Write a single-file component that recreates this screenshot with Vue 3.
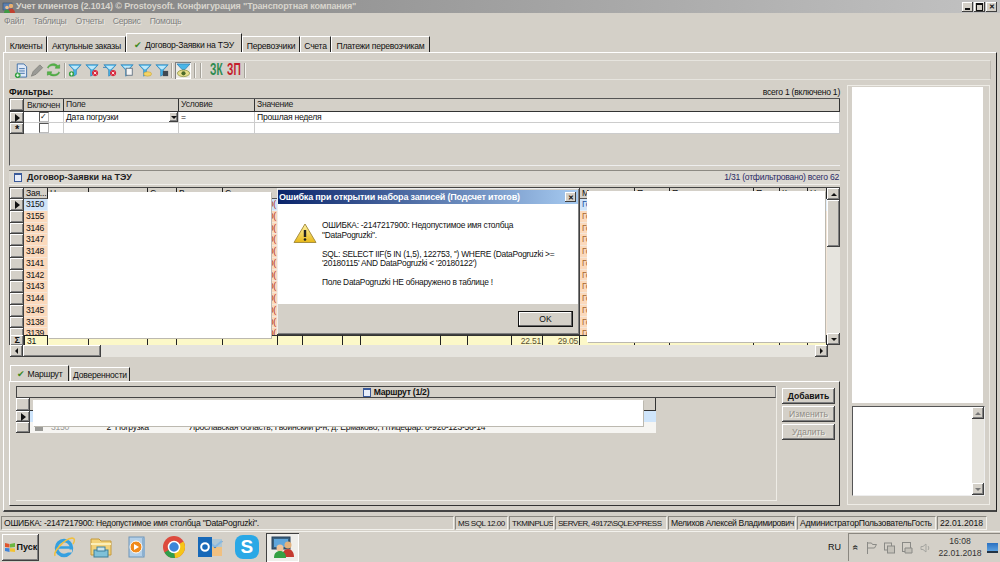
<template>
  <div class="desktop">
    <div class="titlebar">
      <svg class="app-ico" width="13" height="12" viewBox="0 0 13 12">
        <rect x="1" y="2" width="9" height="7" fill="#5b7fb0" stroke="#34506f" stroke-width=".6" />
        <circle cx="9" cy="5" r="2.2" fill="#e8b070" />
        <path d="M5 12c0-3 2-4.500 4-4.500s4 1.500 4 4.500z" fill="#c04030" />
        <circle cx="5" cy="6.500" r="1.800" fill="#eec090" />
        <path d="M2 12c0-2.500 1.300-3.500 3-3.500s3 1 3 3.500z" fill="#3f9a45" />
      </svg>
      <span class="title-text">Учет клиентов (2.1014) © Prostoysoft. Конфигурация "Транспортная компания"</span>
      <div class="win-btns">
        <span class="win-btn"><i class="min-glyph"></i></span>
        <span class="win-btn"><i class="max-glyph"></i></span>
        <span class="win-btn close-btn">✕</span>
      </div>
    </div>

    <div class="menubar">
      <span v-for="m in menu" :key="m">{{ m }}</span>
    </div>

    <div class="tabs">
      <div v-for="t in tabs" :key="t.name" class="tab" :class="{ active: t.active }" :style="{ width: t.w + 'px' }">
        <span v-if="t.active" class="check">✔</span>{{ t.name }}
      </div>
    </div>

    <div class="page">
      <div class="toolbar">
        <svg class="tb-ico" width="14" height="15" viewBox="0 0 14 16">
          <path d="M3 1h7l3 3v11H3z" fill="#dfe9f7" stroke="#3f6fa8" />
          <path d="M5 6h6M5 8.500h6M5 11h6" stroke="#3f6fa8" />
          <circle cx="3.500" cy="13" r="3" fill="#35a043" />
          <path d="M1.800 13h3.400M3.500 11.300v3.400" stroke="#fff" />
        </svg>
        <svg class="tb-ico" width="16" height="15" viewBox="0 0 16 16">
          <path d="M2 14l2-5 7-7 3 3-7 7z" fill="#9a9a96" stroke="#85857f" />
        </svg>
        <svg class="tb-ico" width="15" height="14" viewBox="0 0 16 16">
          <path d="M2 6c1-3 6-4 9-2l-1 2h5V2l-2 1C9-1 3 1 1 5z" fill="#58b848" stroke="#2d8a2d" stroke-width=".5" />
          <path d="M14 10c-1 3-6 4-9 2l1-2H1v4l2-1c4 3 10 2 12-2z" fill="#58b848" stroke="#2d8a2d" stroke-width=".5" />
        </svg>
        <i class="tb-sep sep-first"></i>
        <span v-for="f in funnels" :key="f" class="funnel">
          <svg width="14" height="14" viewBox="0 0 16 16">
            <path d="M1 2h14L9.500 8v5L6.500 15V8z" fill="#49b6e8" stroke="#2c7fb8" stroke-width=".8" />
            <path d="M3 3h10L9 7H7z" fill="#bfe8fa" />
            <g v-if="f === 'add'">
              <circle cx="4" cy="12.500" r="3" fill="#35a043" />
              <path d="M2.300 12.500h3.400M4 10.800v3.400" stroke="#fff" />
            </g>
            <g v-if="f === 'del' || f === 'delall'">
              <circle cx="11.500" cy="11.500" r="3.500" fill="#d8283c" />
              <path d="M10 10l3 3M13 10l-3 3" stroke="#fff" />
            </g>
            <path v-if="f === 'delall'" d="M0 5h4" stroke="#2c7fb8" />
            <rect v-if="f === 'edit'" x="7" y="6" width="7" height="8" fill="#f4f4f4" stroke="#607080" />
            <ellipse v-if="f === 'open'" cx="11" cy="12.500" rx="4.500" ry="2.500" fill="#f4d466" stroke="#c09a30" stroke-width=".6" />
            <rect v-if="f === 'save'" x="9" y="9" width="6" height="6" fill="#404850" />
          </svg>
        </span>
        <i class="tb-sep sep-eye"></i>
        <span class="eye-btn">
          <svg width="15" height="15" viewBox="0 0 16 16">
            <path d="M1 1h14L9.500 7H6.500z" fill="#49b6e8" stroke="#2c7fb8" stroke-width=".8" />
            <ellipse cx="8" cy="11" rx="6.500" ry="3.500" fill="#e6dc8a" stroke="#7c8a30" stroke-width=".7" />
            <circle cx="8" cy="11" r="2.200" fill="#4a6a28" />
          </svg>
        </span>
        <i class="tb-sep sep-a"></i><i class="tb-sep sep-b"></i>
        <span class="big-letter green">ЗК</span>
        <span class="big-letter red">ЗП</span>
        <i class="tb-sep sep-c"></i>
      </div>

      <div class="work">
        <div class="left">
          <div class="filters">
            <div class="section-label">
              <b>Фильтры:</b>
              <span>всего 1 (включено 1)</span>
            </div>
            <div class="filter-grid">
              <div class="f-row f-head">
                <span class="ind raised"></span><span class="fc c-on">Включен</span><span class="fc c-field">Поле</span><span class="fc c-cond">Условие</span><span class="fc c-val">Значение</span>
              </div>
              <div class="f-row f-data">
                <span class="ind raised"><i class="arrow"></i></span>
                <span class="fc c-on"><i class="cb checked">✓</i></span>
                <span class="fc c-field">Дата погрузки<i class="drop raised"><i class="tri-down"></i></i></span>
                <span class="fc c-cond">=</span>
                <span class="fc c-val">Прошлая неделя</span>
              </div>
              <div class="f-row f-data">
                <span class="ind raised star">*</span>
                <span class="fc c-on"><i class="cb"></i></span>
                <span class="fc c-field"></span><span class="fc c-cond"></span><span class="fc c-val"></span>
              </div>
            </div>
          </div>

          <div class="section-bar">
            <b><i class="doc-mark"></i>Договор-Заявки на ТЭУ</b>
            <span>1/31 (отфильтровано) всего 62</span>
          </div>

          <div class="main-grid">
            <div class="grid-inner">
              <div class="g-row g-head">
                <span class="ind raised"></span>
                <span v-for="(c, i) in columns" :key="i" class="gh" :class="c.cls" :style="{ width: c.w + 'px' }">{{ c.title }}</span>
              </div>
              <div class="g-rows">
                <div v-for="(r, ri) in rows" :key="r" class="g-row" :class="{ current: ri === 0 }">
                  <span class="ind raised"><i v-if="ri === 0" class="arrow"></i></span>
                  <span v-for="(c, i) in columns" :key="i" class="gc" :class="c.cell" :style="{ width: c.w + 'px' }">{{ i === 0 ? r : c.val }}</span>
                </div>
              </div>
              <div class="g-row g-sum">
                <span class="ind raised sigma">Σ</span>
                <span v-for="(c, i) in columns" :key="i" class="gs" :class="{ 'sum-first': i === 0 }" :style="{ width: c.w + 'px' }">{{ c.sum }}</span>
              </div>
            </div>
            <div class="v-scroll">
              <span class="sb-btn raised"><i class="tri-up"></i></span>
              <span class="sb-thumb raised"></span>
              <span class="sb-track"></span>
              <span class="sb-btn raised"><i class="tri-down"></i></span>
            </div>
            <div class="cover cover-left"></div>
            <div class="cover cover-right"></div>
          </div>

          <div class="h-scroll">
            <span class="sb-btn raised"><i class="tri-left"></i></span>
            <span class="h-thumb raised"></span>
            <span class="sb-track"></span>
            <span class="sb-btn raised"><i class="tri-right"></i></span>
            <span class="sb-corner"></span>
          </div>

          <div class="sub-tabs">
            <div class="sub-tab active"><span class="check">✔</span>Маршрут</div>
            <div class="sub-tab">Доверенности</div>
          </div>
          <div class="sub-panel">
            <div class="route-box">
              <div class="route-title"><i class="doc-mark"></i>Маршрут (1/2)</div>
              <div class="route-grid">
                <div class="r-row r-head"><span class="ind raised"></span><span class="r-rest"></span></div>
                <div class="r-row r-sel"><span class="ind raised"><i class="arrow"></i></span><span class="r-rest"></span></div>
                <div class="r-row r-last">
                  <span class="ind raised"></span>
                  <span class="r-ico"></span>
                  <span class="r-id">3150</span>
                  <span class="r-num">2</span>
                  <span class="r-kind">Погрузка</span>
                  <span class="r-addr">Ярославская область, Гвоинский р-н, д. Ермаково, Птицефар. 8-920-123-56-14</span>
                </div>
                <div class="cover cover-route"></div>
              </div>
            </div>
            <div class="route-btns">
              <button class="win-button strong">Добавить</button>
              <button class="win-button off">Изменить</button>
              <button class="win-button off">Удалить</button>
            </div>
          </div>
        </div>

        <div class="right">
          <div class="right-white"></div>
          <div class="memo">
            <div class="memo-text"></div>
            <div class="v-scroll memo-scroll">
              <span class="sb-btn raised"><i class="tri-up grey"></i></span>
              <span class="sb-track"></span>
              <span class="sb-btn raised"><i class="tri-down grey"></i></span>
            </div>
          </div>
        </div>
      </div>
    </div>

    <div class="statusbar">
      <span
        v-for="s in statusCells"
        :key="s.t"
        class="st"
        :class="{ latin: s.latin }"
        :style="{ width: s.w + 'px', letterSpacing: s.ls + 'px' }"
      >{{ s.t }}</span>
    </div>

    <div class="taskbar">
      <button class="start">
        <svg width="12" height="11" viewBox="0 0 12 11">
          <path d="M1 1l4.500 1v3.500L1 5z" fill="#e0552c" />
          <path d="M6 2l5-1v4l-5 .500z" fill="#6ab640" />
          <path d="M1 6l4.500.200V10L1 9z" fill="#3f83d8" />
          <path d="M6 6.200l5 .300v3.500l-5-.500z" fill="#f2c230" />
        </svg>
        <b>Пуск</b>
      </button>
      <div class="apps">
        <span class="app">
          <svg width="24" height="24" viewBox="0 0 24 24">
            <circle cx="12" cy="13" r="7.500" fill="none" stroke="#35a0e0" stroke-width="3.500" />
            <path d="M6 12.500h13" stroke="#35a0e0" stroke-width="2.500" />
            <path d="M20 16h-6" stroke="#d4d0c8" stroke-width="3" />
            <path d="M3 21C1 17 12 4 20 3c3 0 3 3 1 6" fill="none" stroke="#f0c040" stroke-width="1.500" />
          </svg>
        </span>
        <span class="app">
          <svg width="24" height="24" viewBox="0 0 24 24">
            <path d="M2 4h8l2 2h10v14H2z" fill="#f3d27a" stroke="#c49a3c" />
            <path d="M2 9h20" stroke="#fbeeb8" stroke-width="2" />
            <rect x="5" y="15" width="14" height="7" fill="#7fc1d8" stroke="#3d7f9a" />
            <rect x="8" y="12" width="8" height="4" fill="#c8e4ee" stroke="#3d7f9a" />
          </svg>
        </span>
        <span class="app">
          <svg width="24" height="24" viewBox="0 0 24 24">
            <rect x="4" y="2" width="15" height="20" fill="#b4d0e8" stroke="#6d94b8" />
            <rect x="17" y="3" width="3" height="18" fill="#8db0cf" />
            <circle cx="11" cy="12" r="6" fill="#f08a1c" stroke="#fff" />
            <path d="M9 9l5 3-5 3z" fill="#fff" />
          </svg>
        </span>
        <span class="app">
          <svg width="24" height="24" viewBox="0 0 24 24">
            <circle cx="12" cy="12" r="11" fill="#dd4b3e" />
            <path d="M12 12L2.500 17.500A11 11 0 0 0 13 23z" fill="#2f9e4a" />
            <path d="M12 12l9.500-5.500A11 11 0 0 1 13 23z" fill="#f5c518" />
            <circle cx="12" cy="12" r="5.500" fill="#3d85d8" stroke="#fff" stroke-width="1.500" />
          </svg>
        </span>
        <span class="app">
          <svg width="26" height="24" viewBox="0 0 26 24">
            <rect x="11" y="4" width="14" height="17" fill="#f0c080" />
            <path d="M11 6l7 6 7-6" fill="none" stroke="#2a78c2" stroke-width="2" />
            <rect x="11" y="4" width="14" height="8" fill="#9dc8ea" opacity=".8" />
            <rect x="1" y="2" width="14" height="20" fill="#1668b8" />
            <circle cx="8" cy="12" r="3.800" fill="none" stroke="#fff" stroke-width="2" />
          </svg>
        </span>
        <span class="app skype"><b>S</b></span>
        <span class="app current-app">
          <svg width="26" height="24" viewBox="0 0 26 24">
            <rect x="2" y="2" width="18" height="12" fill="#39617f" stroke="#28405a" />
            <rect x="4" y="4" width="14" height="8" fill="#5fa6dc" />
            <circle cx="18" cy="10" r="3.500" fill="#e4b27c" />
            <path d="M12 22c0-5 2.500-8 6-8s6 3 6 8z" fill="#c43a30" />
            <circle cx="10" cy="13" r="3.500" fill="#f0c49c" />
            <path d="M4 23c0-5 2.500-7 6-7s6 2 6 7z" fill="#35a043" />
          </svg>
        </span>
      </div>
      <span class="lang">RU</span>
      <div class="tray">
        <span class="tray-up">«</span>
        <svg width="11" height="12" viewBox="0 0 11 12" fill="none" stroke="#8a8a86"><path d="M1.500 0v12M1.500 1h4l1 1.500h4L8.500 6h-7" /></svg>
        <svg width="11" height="12" viewBox="0 0 11 12" fill="none" stroke="#8a8a86"><rect x=".5" y="1" width="7" height="7" /><rect x="3.500" y="4" width="7" height="7" fill="#c4c1b9" /></svg>
        <svg width="11" height="12" viewBox="0 0 11 12" fill="none" stroke="#8a8a86"><rect x=".5" y=".5" width="8" height="9" /><path d="M3 6h7v5H3z" fill="#c4c1b9" /></svg>
        <svg width="11" height="12" viewBox="0 0 11 12" fill="none" stroke="#a5a5a0"><path d="M1 4.500h2L6 2v8L3 7.500H1zM8 4c1 1 1 3 0 4" /></svg>
        <div class="clock"><span>16:08</span><span>22.01.2018</span></div>
        <span class="show-desktop"></span>
      </div>
    </div>

    <div class="dialog">
      <div class="dlg-title">
        <b>Ошибка при открытии набора записей (Подсчет итогов)</b>
        <span class="win-btn dlg-close">✕</span>
      </div>
      <div class="dlg-body">
        <svg class="warn" width="24" height="21" viewBox="0 0 24 21">
          <defs>
            <linearGradient id="warn-fill" x1="0" y1="0" x2="0" y2="1">
              <stop offset="0" stop-color="#fff4a8" />
              <stop offset="1" stop-color="#e8b818" />
            </linearGradient>
          </defs>
          <path d="M12 1L23 19.500H1z" fill="url(#warn-fill)" stroke="#a89040" stroke-linejoin="round" />
          <path d="M12 7v7" stroke="#222" stroke-width="2.400" />
          <circle cx="12" cy="16.500" r="1.300" fill="#222" />
        </svg>
        <div class="dlg-text">
          <p>ОШИБКА: -2147217900: Недопустимое имя столбца<br />"DataPogruzki".</p>
          <p>SQL: SELECT IIF(5 IN (1,5), 122753, '') WHERE (DataPogruzki &gt;=<br />'20180115' AND DataPogruzki &lt; '20180122')</p>
          <p>Поле DataPogruzki НЕ обнаружено в таблице !</p>
        </div>
      </div>
      <div class="dlg-foot">
        <button class="ok-btn">OK</button>
      </div>
    </div>
  </div>
</template>

<script setup>
const menu = ['Файл', 'Таблицы', 'Отчеты', 'Сервис', 'Помощь']

const tabs = [
  { name: 'Клиенты', w: 42 },
  { name: 'Актульные заказы', w: 79 },
  { name: 'Договор-Заявки на ТЭУ', w: 116, active: true },
  { name: 'Перевозчики', w: 58 },
  { name: 'Счета', w: 31 },
  { name: 'Платежи перевозчикам', w: 99 }
]

const funnels = ['add', 'del', 'delall', 'edit', 'open', 'save']

const rows = [3150, 3155, 3146, 3147, 3148, 3141, 3142, 3143, 3144, 3145, 3138, 3139]

const widths = [24, 41, 59, 29, 46, 55, 25, 40, 18, 80, 27, 44, 31, 37, 55, 35, 84, 26, 28, 19]
const titles = ['Зая...', 'Н', '', 'С', 'В', 'С', '', '', '', '', '', '', '', '', 'М', 'П', 'П', 'П', 'К', 'Н']
const columns = widths.map((w, i) => ({
  w,
  title: titles[i],
  cls: { red: i === 2 },
  cell: i === 5 ? 'end-red' : i === 14 ? 'start-brown' : '',
  val: i === 5 ? '0(' : i === 14 ? 'Го' : '',
  sum: i === 0 ? '31' : i === 12 ? '22.51' : i === 13 ? '29.05' : ''
}))

const statusCells = [
  { t: 'ОШИБКА: -2147217900: Недопустимое имя столбца "DataPogruzki".', w: 453, ls: -0.25 },
  { t: 'MS SQL 12.00', w: 53, ls: -0.45, latin: true },
  { t: 'TKMINPLUS', w: 45, ls: -0.5, latin: true },
  { t: 'SERVER, 49172\\SQLEXPRESS', w: 112, ls: -0.5, latin: true },
  { t: 'Мелихов Алексей Владимирович', w: 128, ls: -0.35 },
  { t: 'АдминистраторПользовательГость', w: 139, ls: -0.25 },
  { t: '22.01.2018', w: 50, ls: 0 }
]
</script>

<style>
html, body { margin: 0; background: #d4d0c8; }
</style>

<style scoped>
.desktop {
  position: relative;
  width: 1000px;
  height: 562px;
  overflow: hidden;
  background: #d4d0c8;
  color: #111;
  font: 8.6px/11px "Liberation Sans", Arial, sans-serif;
  letter-spacing: -.25px;
  display: flex;
  flex-direction: column;
}
i { font-style: normal; display: block; }
.raised {
  background: #d4d0c8;
  box-shadow: inset -1px -1px #404040, inset 1px 1px #fff, inset -2px -2px #808080;
}

/* title + menu */
.titlebar {
  height: 13px;
  flex: none;
  display: flex;
  align-items: center;
  background: linear-gradient(90deg, #7f7f7f, #c2c2c2);
  padding-left: 2px;
}
.title-text {
  margin-left: 1px;
  font-weight: bold;
  font-size: 9px;
  letter-spacing: -.15px;
  color: #d8d5cd;
  white-space: nowrap;
}
.win-btns { margin-left: auto; display: flex; gap: 1px; padding-right: 3px; }
.win-btn {
  width: 11px;
  height: 10px;
  background: #d4d0c8;
  box-shadow: inset -1px -1px #404040, inset 1px 1px #fff;
  display: flex;
  align-items: center;
  justify-content: center;
  font-size: 7px;
  line-height: 1;
  font-weight: bold;
  color: #111;
}
.min-glyph { width: 5px; height: 2px; background: #111; margin-top: 5px; }
.max-glyph { width: 5px; height: 5px; border: 1px solid #111; border-top-width: 2px; }
.menubar {
  height: 20px;
  flex: none;
  display: flex;
  gap: 9px;
  padding: 1px 0 0 4px;
  box-sizing: border-box;
  align-items: flex-start;
  color: #808080;
  text-shadow: 1px 1px #eeece6;
  line-height: 14px;
}

/* tabs */
.tabs { height: 19px; flex: none; display: flex; align-items: flex-end; padding-left: 5px; }
.tab {
  height: 16px;
  box-sizing: border-box;
  text-align: center;
  line-height: 18px;
  border-top: 1px solid #fff;
  border-left: 1px solid #fff;
  border-right: 1px solid #222;
  white-space: nowrap;
}
.tab.active { height: 19px; line-height: 22px; background: #d4d0c8; }
.check { color: #3d8a24; font-size: 9px; margin-right: 3px; }

/* page */
.page {
  height: 460px;
  flex: none;
  box-sizing: border-box;
  margin: 0 3px 0 3px;
  padding: 7px 5px 0 5px;
  border-top: 1px solid #fff;
  border-left: 1px solid #fff;
  border-right: 1px solid #222;
  border-bottom: 2px solid #444;
}
.toolbar {
  height: 20px;
  box-sizing: border-box;
  display: flex;
  align-items: center;
  padding-left: 4px;
  border: 1px solid #e6e4de;
  border-right-color: #bdb9b0;
}
.tb-ico { margin-right: 1px; flex: none; }
.tb-sep { width: 1px; height: 15px; background: #a5a29a; box-shadow: 1px 0 #f4f3ef; flex: none; }
.sep-first { margin: 0 1px 0 2px; }
.funnel { width: 17.500px; display: flex; justify-content: center; flex: none; }
.sep-eye { margin: 0 3px 0 0; }
.eye-btn {
  width: 16px;
  height: 17px;
  display: flex;
  align-items: center;
  justify-content: center;
  background: #eceae4;
  box-shadow: inset 1px 1px #808080, inset -1px -1px #fff;
  flex: none;
}
.sep-a { margin: 0 5px 0 3px; }
.sep-b { margin: 0 9px 0 0; }
.big-letter {
  width: 17px;
  font-size: 17px;
  line-height: 16px;
  letter-spacing: 0;
  font-weight: bold;
  flex: none;
  white-space: nowrap;
  transform: scaleX(.6);
  transform-origin: 0 50%;
}
.green { color: #2e8b50; }
.red { color: #c4202c; }
.sep-c { margin-left: 0; }

.work { display: flex; gap: 7px; margin-top: 5px; }
.left { width: 831px; flex: none; }

/* filters */
.section-label {
  height: 13px;
  box-sizing: border-box;
  padding-top: 1px;
  display: flex;
  justify-content: space-between;
  align-items: center;
}
.section-label b { font-size: 9px; letter-spacing: 0; }
.filter-grid {
  height: 68px;
  box-sizing: border-box;
  border-top: 1px solid #555;
  border-left: 1px solid #555;
  border-bottom: 1px solid #eee;
}
.f-row { display: flex; height: 11px; }
.f-head { height: 12px; border-bottom: 1px solid #333; }
.f-head .fc { background: #d4d0c8; border-right: 1px solid #333; color: #222; padding-left: 2px; }
.f-data .fc { background: #fff; border-right: 1px solid #ccc; border-bottom: 1px solid #ccc; padding-left: 2px; }
.fc { box-sizing: border-box; height: 100%; line-height: 10px; position: relative; overflow: hidden; white-space: nowrap; }
.c-on { width: 40px; display: flex; justify-content: center; align-items: center; padding-left: 0 !important; }
.c-field { width: 115px; }
.c-cond { width: 76px; }
.c-val { flex: 1; }
.ind {
  width: 14px;
  flex: none;
  display: flex;
  align-items: center;
  justify-content: center;
  box-sizing: border-box;
}
.star { font-size: 11px; font-weight: bold; line-height: 14px; }
.arrow {
  width: 0;
  height: 0;
  border-left: 5px solid #111;
  border-top: 4px solid transparent;
  border-bottom: 4px solid transparent;
}
.cb {
  width: 8px;
  height: 8px;
  border: 1px solid #555;
  border-right-color: #bbb;
  border-bottom-color: #bbb;
  background: #fff;
  font-size: 8px;
  line-height: 8px;
  text-align: center;
}
.drop {
  position: absolute;
  right: 0;
  top: 0;
  width: 9px;
  height: 10px;
  display: flex;
  align-items: center;
  justify-content: center;
}
.tri-down, .tri-up, .tri-left, .tri-right { width: 0; height: 0; }
.tri-down { border-left: 3px solid transparent; border-right: 3px solid transparent; border-top: 3px solid #111; }
.tri-up { border-left: 3px solid transparent; border-right: 3px solid transparent; border-bottom: 3px solid #111; }
.tri-left { border-top: 3px solid transparent; border-bottom: 3px solid transparent; border-right: 3px solid #111; }
.tri-right { border-top: 3px solid transparent; border-bottom: 3px solid transparent; border-left: 3px solid #111; }
.tri-up.grey { border-bottom-color: #777; }
.tri-down.grey { border-top-color: #777; }

/* main grid */
.section-bar {
  margin-top: 4px;
  height: 15px;
  box-sizing: border-box;
  display: flex;
  justify-content: space-between;
  align-items: center;
  padding: 0 1px 0 5px;
  border-top: 1px solid #8d8a83;
  border-bottom: 1px solid #f0eeea;
  background: #dcd9d2;
  color: #2a2a66;
}
.section-bar b { font-size: 9px; letter-spacing: 0; color: #222; display: flex; align-items: center; }
.doc-mark {
  width: 6px;
  height: 6px;
  margin-right: 5px;
  border: 1px solid #3a5a9a;
  border-top-width: 2px;
  background: #e8eefa;
}
.main-grid { position: relative; display: flex; margin-top: 2px; height: 158px; border-top: 1px solid #444; border-left: 1px solid #444; box-sizing: border-box; }
.grid-inner { width: 817px; flex: none; overflow: hidden; display: flex; flex-direction: column; }
.g-row { display: flex; flex: none; height: 11.750px; }
.g-head { height: 11px; }
.gh {
  flex: none;
  box-sizing: border-box;
  background: #d4d0c8;
  border-right: 1px solid #222;
  border-bottom: 1px solid #555;
  padding-left: 2px;
  line-height: 10px;
  overflow: hidden;
  white-space: nowrap;
}
.gh.red { color: #c02020; }
.g-rows { height: 135.500px; overflow: hidden; flex: none; }
.gc {
  flex: none;
  box-sizing: border-box;
  background: #fbd9bc;
  border-right: 1px solid #f4e6d8;
  border-bottom: 1px solid #f4e6d8;
  padding: 0 1px 0 2px;
  line-height: 11px;
  overflow: hidden;
  white-space: nowrap;
}
.current .gc { background: #cfe3f8; border-color: #e2eefa; }
.end-red { text-align: right; color: #b03020; }
.start-brown { color: #a86830; }
.current .start-brown { color: #2050a0; }
.g-sum { height: 11.500px; }
.gs {
  flex: none;
  box-sizing: border-box;
  background: #fcf8c8;
  border-right: 1px solid #222;
  border-top: 1px solid #333;
  padding: 0 1px 0 2px;
  text-align: right;
  line-height: 10px;
  color: #5a5030;
  overflow: hidden;
}
.gs.sum-first { text-align: left; color: #111; border: 1px solid #222; }
.sigma { font-size: 9px; font-weight: bold; }
.v-scroll { flex: 1; display: flex; flex-direction: column; }
.sb-btn { width: 13px; height: 12px; flex: none; display: flex; align-items: center; justify-content: center; }
.sb-thumb { height: 47px; width: 13px; flex: none; }
.sb-track { flex: 1; background: #e6e4de; }
.h-scroll { display: flex; height: 12px; margin-left: 1px; }
.h-thumb { width: 78px; flex: none; margin-left: 0; }
.sb-corner { width: 12px; flex: none; background: #d4d0c8; }
.cover { position: absolute; background: #fff; box-shadow: 1px 1px 0 #bcb9b0; }
.cover-left { left: 38px; top: 4px; width: 223px; height: 146px; }
.cover-right { left: 577px; top: 3px; width: 238px; height: 151px; }

/* lower tabs */
.sub-tabs { display: flex; height: 16px; margin: 8px 0 0 1px; align-items: flex-end; }
.sub-tab {
  width: 60px;
  height: 14px;
  box-sizing: border-box;
  text-align: center;
  line-height: 14px;
  border-top: 1px solid #fff;
  border-right: 1px solid #222;
  border-left: 1px solid #fff;
  white-space: nowrap;
}
.sub-tab.active { width: 59px; height: 16px; line-height: 16px; margin-right: 1px; }
.sub-panel {
  height: 125px;
  box-sizing: border-box;
  display: flex;
  border-top: 1px solid #fff;
  border-left: 1px solid #fff;
  border-right: 1px solid #333;
  border-bottom: 1px solid #333;
  padding: 4px 0 0 6px;
}
.route-box {
  width: 761px;
  height: 115px;
  flex: none;
  box-sizing: border-box;
  border-right: 1px solid #eeece6;
  border-bottom: 1px solid #eeece6;
}
.route-title {
  height: 12px;
  box-sizing: border-box;
  border: 1px solid #444;
  border-right-color: #888;
  font-weight: bold;
  display: flex;
  align-items: center;
  justify-content: center;
  line-height: 10px;
}
.route-title .doc-mark { margin-right: 3px; }
.route-grid { position: relative; width: 640px; }
.r-row { display: flex; height: 11px; white-space: nowrap; overflow: hidden; }
.r-head { height: 13px; }
.r-head .r-rest { flex: 1; background: #d4d0c8; box-shadow: inset -1px -1px #333; }
.r-sel .r-rest { flex: 1; background: #cfe5fb; }
.r-last { background: #f6f5f2; }
.r-ico { width: 8px; height: 6px; margin: 3px 8px 0 5px; background: #9a9a96; flex: none; }
.r-id { width: 45px; color: #999; flex: none; }
.r-num { width: 15px; text-align: right; flex: none; margin-right: 4px; }
.r-kind { width: 74px; flex: none; }
.r-addr { flex: 1; overflow: hidden; }
.cover-route { left: 17px; top: 2px; width: 610px; height: 26px; }
.route-btns { display: flex; flex-direction: column; gap: 2px; padding: 2px 0 0 5px; }
.win-button {
  width: 53px;
  height: 16px;
  padding: 0;
  border: none;
  background: #d4d0c8;
  box-shadow: inset -1px -1px #404040, inset 1px 1px #fff, inset -2px -2px #808080;
  font: 8.600px "Liberation Sans", Arial, sans-serif;
  color: #111;
}
.win-button.strong { font-weight: bold; }
.win-button.off { color: #8f8c85; text-shadow: 1px 1px #f2f1ec; }

/* right */
.right {
  width: 143px;
  height: 420px;
  flex: none;
  box-sizing: border-box;
  margin-top: 0;
  border: 1px solid #eeece6;
  padding: 1px 4px 0 4px;
}
.right-white { height: 316px; width: 131px; background: #fff; }
.memo {
  display: flex;
  width: 133px;
  height: 90px;
  margin-top: 3px;
  box-sizing: border-box;
  border-top: 1px solid #555;
  border-left: 1px solid #555;
  border-right: 1px solid #eee;
  border-bottom: 1px solid #eee;
  background: #fff;
}
.memo-text { flex: 1; }
.memo-scroll { flex: none; width: 12px; }
.memo-scroll .sb-btn { width: 12px; }

/* status + taskbar */
.statusbar {
  flex: none;
  display: flex;
  gap: 1px;
  height: 14px;
  margin-top: 4px;
  padding-left: 1px;
}
.st {
  flex: none;
  box-sizing: border-box;
  padding-left: 2px;
  line-height: 13px;
  border-top: 1px solid #8a8780;
  border-left: 1px solid #8a8780;
  border-right: 1px solid #f2f1ec;
  border-bottom: 1px solid #f2f1ec;
  white-space: nowrap;
  overflow: hidden;
}
.st.latin { font-size: 8px; }
.taskbar {
  flex: 1;
  display: flex;
  align-items: center;
  margin-top: 1px;
  border-top: 1px solid #f2f1ec;
  padding-left: 2px;
}
.start {
  width: 37px;
  height: 27px;
  padding: 0;
  border: none;
  background: #d4d0c8;
  box-shadow: inset -1px -1px #404040, inset 1px 1px #fff, inset -2px -2px #808080;
  display: flex;
  align-items: center;
  justify-content: center;
  gap: 1px;
  font: bold 9px "Liberation Sans", Arial, sans-serif;
  color: #111;
}
.apps { display: flex; align-items: center; margin-left: 7px; }
.app { width: 36.500px; height: 29px; display: flex; align-items: center; justify-content: center; flex: none; }
.skype b {
  width: 24px;
  height: 24px;
  border-radius: 8px;
  background: #2aa8e6;
  color: #fff;
  font: bold 19px/24px "Liberation Sans", Arial, sans-serif;
  text-align: center;
  display: block;
}
.current-app {
  width: 33px;
  margin-left: 1px;
  background: #efeeea;
  box-shadow: inset 1px 1px #404040, inset -1px -1px #fff;
}
.lang { margin-left: auto; margin-right: 7px; font-size: 9px; letter-spacing: 0; }
.tray {
  width: 152px;
  height: 28px;
  box-sizing: border-box;
  display: flex;
  align-items: center;
  gap: 7px;
  padding-left: 2px;
  border-top: 1px solid #8a8780;
  border-left: 1px solid #8a8780;
  color: #333;
}
.tray-up { font-size: 10px; font-weight: bold; transform: rotate(90deg); width: 8px; text-align: center; }
.clock {
  display: flex;
  flex-direction: column;
  align-items: center;
  line-height: 11.500px;
  width: 44px;
  letter-spacing: 0;
}
.show-desktop { width: 11px; height: 8px; background: linear-gradient(#2a70c0, #5aa0e0); margin-left: -2px; border-bottom: 2px solid #234; }

/* dialog */
.dialog {
  position: absolute;
  left: 277px;
  top: 188px;
  width: 303px;
  height: 147px;
  box-sizing: border-box;
  background: #d4d0c8;
  padding: 2px 2px 2px 1px;
  display: flex;
  flex-direction: column;
  box-shadow: inset -1px -1px #404040, inset 1px 1px #eee, inset -2px -2px #808080;
}
.dlg-title {
  height: 14px;
  flex: none;
  display: flex;
  align-items: center;
  justify-content: space-between;
  padding-left: 1px;
  background: linear-gradient(90deg, #0a246a, #a6caf0);
  color: #fff;
}
.dlg-title b { font-size: 9px; letter-spacing: -.18px; white-space: nowrap; }
.dlg-close { margin-right: 2px; }
.dlg-body {
  height: 100px;
  flex: none;
  display: flex;
  background: #fff;
  box-sizing: border-box;
  padding: 16px 0 0 15px;
}
.warn { flex: none; margin: 3px 5px 0 0; }
.dlg-text { font-size: 8.400px; line-height: 9.600px; color: #111; white-space: nowrap; padding-top: 1px; }
.dlg-text p { margin: 0 0 9.500px; }
.dlg-foot { flex: 1; display: flex; justify-content: flex-end; align-items: flex-start; padding: 7px 5px 0 0; }
.ok-btn {
  width: 55px;
  height: 16px;
  padding: 0;
  background: #d4d0c8;
  border: 1px solid #111;
  box-shadow: inset -1px -1px #666, inset 1px 1px #fff;
  font: 8.600px "Liberation Sans", Arial, sans-serif;
  color: #111;
}
</style>
